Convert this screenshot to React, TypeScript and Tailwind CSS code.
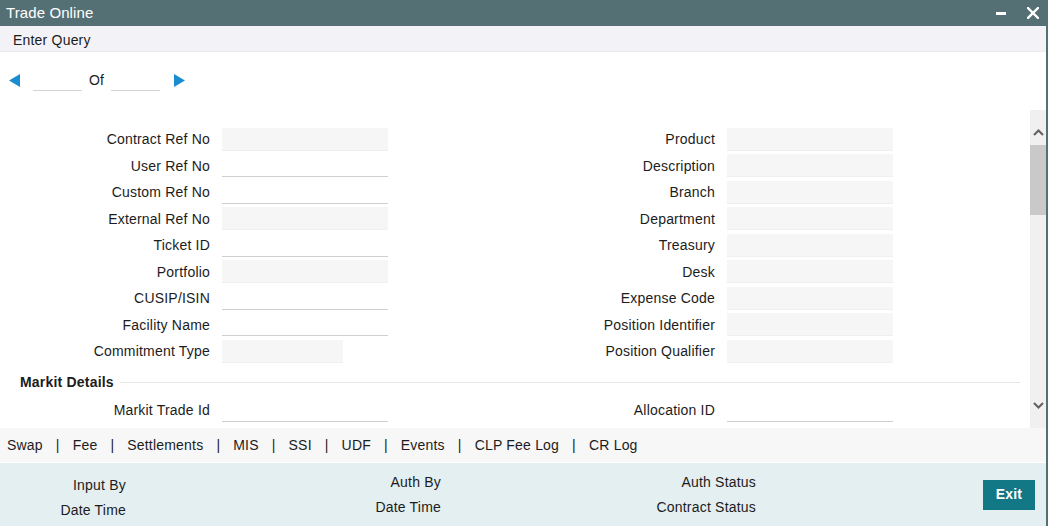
import React from "react";

type FieldKind = "grey" | "line" | "greyNarrow";

const leftRows: [string, FieldKind][] = [
  ["Contract Ref No", "grey"],
  ["User Ref No", "line"],
  ["Custom Ref No", "line"],
  ["External Ref No", "grey"],
  ["Ticket ID", "line"],
  ["Portfolio", "grey"],
  ["CUSIP/ISIN", "line"],
  ["Facility Name", "line"],
  ["Commitment Type", "greyNarrow"],
];

const rightRows: [string, FieldKind][] = [
  ["Product", "grey"],
  ["Description", "grey"],
  ["Branch", "grey"],
  ["Department", "grey"],
  ["Treasury", "grey"],
  ["Desk", "grey"],
  ["Expense Code", "grey"],
  ["Position Identifier", "grey"],
  ["Position Qualifier", "grey"],
];

function Field({ kind }: { kind: FieldKind }) {
  if (kind === "line")
    return <div className="h-[23px] w-[166px] border-b border-[#cfcfcf] bg-white" />;
  if (kind === "greyNarrow")
    return <div className="h-[23px] w-[121px] border-b border-[#efefef] bg-[#f6f6f6]" />;
  return <div className="h-[23px] w-[166px] border-b border-[#efefef] bg-[#f6f6f6]" />;
}

function Row({ label, kind }: { label: string; kind: FieldKind }) {
  return (
    <div className="flex h-[26.5px] items-center">
      <div className="w-[210px] text-right leading-none">{label}</div>
      <div className="ml-[12px]">
        <Field kind={kind} />
      </div>
    </div>
  );
}

function Column({ rows }: { rows: [string, FieldKind][] }) {
  return (
    <div className="flex flex-col">
      {rows.map(([l, k]) => (
        <Row key={l} label={l} kind={k} />
      ))}
    </div>
  );
}

const tabs = ["Swap", "Fee", "Settlements", "MIS", "SSI", "UDF", "Events", "CLP Fee Log", "CR Log"];

export default function App() {
  return (
    <div
      className="flex h-[526px] w-[1048px] flex-col overflow-hidden bg-white text-[14px] tracking-[0.2px] text-[#1c1c1c]"
      style={{ fontFamily: '"Liberation Sans", Arial, sans-serif' }}
    >
      {/* Title bar */}
      <div className="flex h-[26px] shrink-0 items-center bg-[#557075] pl-[6px] text-white">
        <span className="pb-[1px] text-[15px] leading-none tracking-[0.1px]">Trade Online</span>
        <div className="ml-auto flex items-center">
          <div className="mr-[21px] h-[3px] w-[10px] bg-white" />
          <svg width="12" height="12" viewBox="0 0 12 12" className="mr-[9px]">
            <path d="M1 1 L11 11 M11 1 L1 11" stroke="white" strokeWidth="2.4" strokeLinecap="square" />
          </svg>
        </div>
      </div>

      {/* Body */}
      <div className="flex min-h-0 flex-1 flex-col border-r-2 border-[#557075]">
        {/* Menu */}
        <div className="flex h-[26px] shrink-0 items-center border-b border-[#ebebef] bg-[#f3f3f7] pl-[13px] pt-[3px]">
          Enter Query
        </div>

        {/* Nav */}
        <div className="h-[58px] shrink-0 pt-[17px]">
          <div className="flex h-[22px] items-center">
            <svg width="11" height="13" viewBox="0 0 11 13" className="ml-[9px]">
              <path d="M0 6.5 L11 0 L11 13 Z" fill="#1b8ccf" />
            </svg>
            <div className="ml-[13px] h-[22px] w-[49px] border-b border-[#d4d4d4]" />
            <span className="ml-[7px]">Of</span>
            <div className="ml-[7px] h-[22px] w-[49px] border-b border-[#d4d4d4]" />
            <svg width="11" height="13" viewBox="0 0 11 13" className="ml-[14px]">
              <path d="M11 6.5 L0 0 L0 13 Z" fill="#1b8ccf" />
            </svg>
          </div>
        </div>

        {/* Scroll area */}
        <div className="flex min-h-0 flex-1">
          <div className="min-w-0 flex-1 overflow-hidden pt-[16px]">
            <div className="flex">
              <div className="w-[505px]">
                <Column rows={leftRows} />
              </div>
              <div>
                <Column rows={rightRows} />
              </div>
            </div>
            <div className="flex h-[32.5px] items-center pl-[20px] pr-[10px] pt-[3px]">
              <span className="font-bold leading-none">Markit Details</span>
              <div className="ml-[6px] h-px flex-1 bg-[#e6e6e6]" />
            </div>
            <div className="flex">
              <div className="w-[505px]">
                <Row label="Markit Trade Id" kind="line" />
              </div>
              <div>
                <Row label="Allocation ID" kind="line" />
              </div>
            </div>
          </div>
          {/* Scrollbar */}
          <div className="flex w-[16px] shrink-0 flex-col bg-[#f0f0f0]">
            <div className="h-[12px]" />
            <div className="flex h-[20px] items-center justify-center">
              <svg width="11" height="7" viewBox="0 0 11 7">
                <path d="M1 6 L5.5 1.5 L10 6" fill="none" stroke="#606060" strokeWidth="2" />
              </svg>
            </div>
            <div className="mt-[3px] h-[70px] bg-[#c9c9c9]" />
            <div className="flex-1" />
            <div className="flex h-[20px] items-center justify-center">
              <svg width="11" height="7" viewBox="0 0 11 7">
                <path d="M1 1 L5.5 5.5 L10 1" fill="none" stroke="#606060" strokeWidth="2" />
              </svg>
            </div>
            <div className="h-[13px]" />
          </div>
        </div>

        {/* Tabs */}
        <div className="flex h-[34px] shrink-0 items-center bg-[#f7f7f7] pl-[7px]">
          {tabs.map((t, i) => (
            <React.Fragment key={t}>
              {i > 0 && <span className="mx-[13px]">|</span>}
              <span>{t}</span>
            </React.Fragment>
          ))}
        </div>

        {/* Footer */}
        <div className="flex h-[64px] shrink-0 border-t border-white bg-[#e4eff1]">
          <div className="w-[315px] pt-[10px] leading-[25px]">
            <div className="w-[126px] text-right">Input By</div>
            <div className="w-[126px] text-right">Date Time</div>
          </div>
          <div className="w-[315px] pt-[7px] leading-[25px]">
            <div className="w-[126px] text-right">Auth By</div>
            <div className="w-[126px] text-right">Date Time</div>
          </div>
          <div className="w-[315px] pt-[7px] leading-[25px]">
            <div className="w-[126px] text-right">Auth Status</div>
            <div className="w-[126px] text-right">Contract Status</div>
          </div>
          <div className="flex flex-1 items-center justify-end pr-[11px]">
            <button className="h-[30px] w-[52px] bg-[#127886] font-bold text-white">Exit</button>
          </div>
        </div>
      </div>
    </div>
  );
}
